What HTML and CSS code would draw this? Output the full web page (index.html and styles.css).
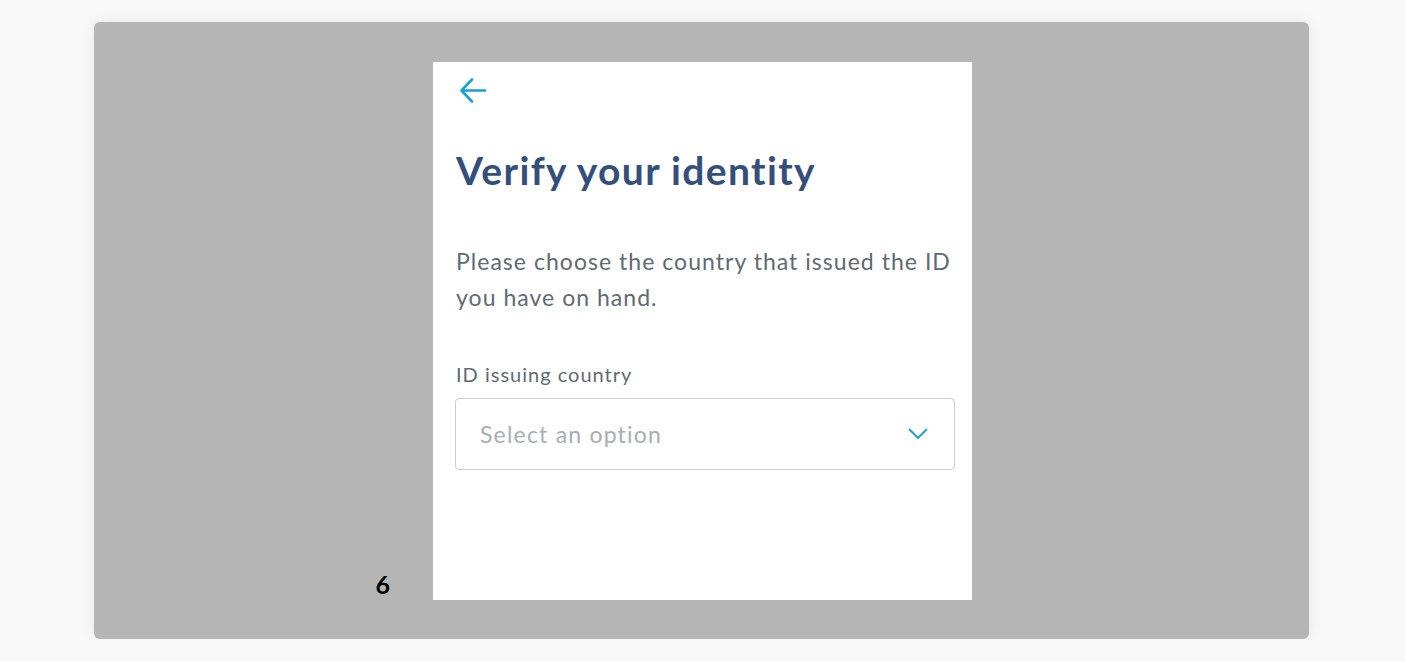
FILE: index.html
```html
<!DOCTYPE html>
<html>
<head>
<meta charset="utf-8">
<link rel="stylesheet" href="styles.css">
</head>
<body>
<div class="panel">
  <div class="slide-num">6</div>
  <div class="card">
    <button class="back" aria-label="Back">
      <svg width="28" height="25" viewBox="0 0 28 25" fill="none" stroke="#1a9fd6" stroke-width="2.6" stroke-linecap="round" stroke-linejoin="round"><path d="M13 1.5 L2.5 12.5 L13 23.5 M3 12.5 H26"/></svg>
    </button>
    <h1 class="title">Verify your identity</h1>
    <p class="desc">Please choose the country that issued the ID you have on hand.</p>
    <label class="label">ID issuing country</label>
    <div class="select">
      <span class="placeholder">Select an option</span>
      <svg width="20" height="12" viewBox="0 0 20 12" fill="none" stroke="#1a9fd6" stroke-width="1.8" stroke-linecap="round" stroke-linejoin="round"><path d="M1.5 1.5 L10 10 L18.5 1.5"/></svg>
    </div>
  </div>
  <div></div>
</div>
</body>
</html>
```
FILE: styles.css
```css
html, body {
  margin: 0;
  padding: 0;
  background: #f8f8f8;
  font-family: Lato, "Open Sans", sans-serif;
}
.panel {
  margin: 22px 0 0 94px;
  width: 1215px;
  height: 617px;
  box-sizing: border-box;
  padding: 40px 0 39px;
  background: #b5b5b5;
  border-radius: 6px;
  box-shadow: 0 0 14px rgba(0,0,0,0.08);
  display: grid;
  grid-template-columns: 339px 539px 1fr;
}
.slide-num {
  justify-self: end;
  align-self: end;
  margin: 0 43px 3px 0;
  font-size: 25px;
  font-weight: 700;
  color: #000;
  line-height: 1;
}
.card {
  background: #fff;
  padding: 16px 0 0 23px;
  display: flex;
  flex-direction: column;
  align-items: flex-start;
}
.back {
  border: 0;
  background: none;
  padding: 0;
  margin: 0 0 0 3px;
  display: block;
  cursor: pointer;
}
.title {
  margin: 41px 0 0;
  font-size: 39px;
  line-height: 46px;
  font-weight: 700;
  color: #344f7c;
  letter-spacing: 1.35px;
}
.desc {
  margin: 50px 0 0;
  font-size: 23px;
  line-height: 36px;
  color: #5f6a73;
  letter-spacing: 1.03px;
  width: 505px;
}
.label {
  margin-top: 47px;
  font-size: 20px;
  line-height: 24px;
  color: #5f6a73;
  letter-spacing: 1px;
}
.select {
  margin: 12px 0 0 -1px;
  width: 500px;
  height: 72px;
  box-sizing: border-box;
  border: 1px solid #c8ccce;
  border-radius: 4px;
  display: flex;
  align-items: center;
  justify-content: space-between;
  padding: 0 26px 0 24px;
}
.placeholder {
  font-size: 23px;
  color: #a9adb1;
  letter-spacing: 1.2px;
}
```
